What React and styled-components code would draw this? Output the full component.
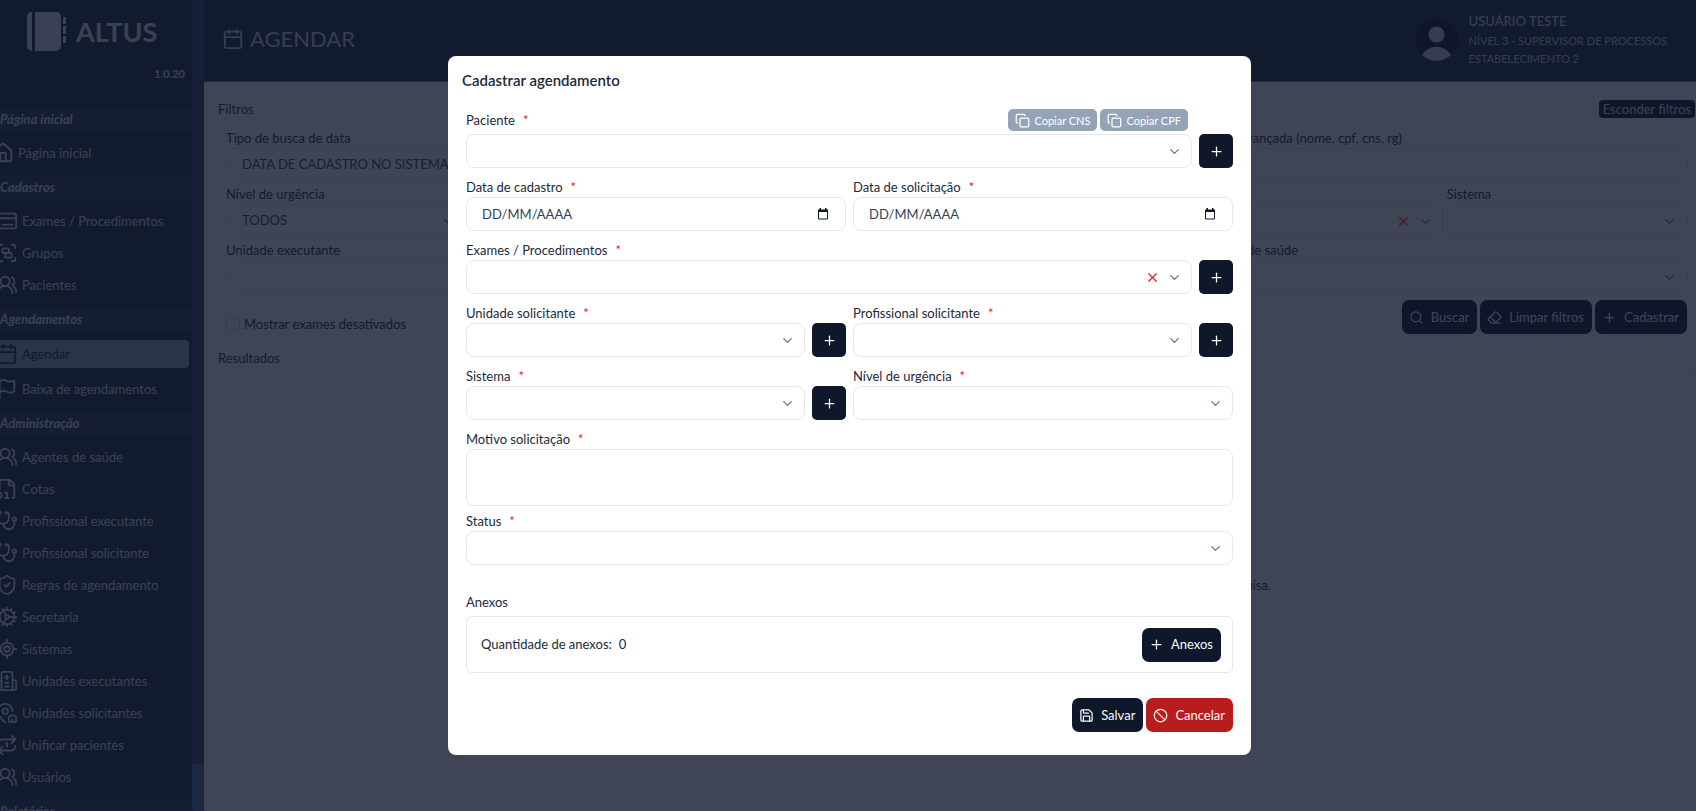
import styled, { createGlobalStyle } from "styled-components";
import {
  Ban,
  Calendar,
  ChevronDown,
  Cog,
  Copy,
  Eraser,
  FileDigit,
  Flag,
  Group,
  House,
  LocateFixed,
  MapPinHouse,
  Plus,
  Repeat1,
  Save,
  Search,
  ShieldCheck,
  Stethoscope,
  UsersRound,
  X,
} from "lucide-react";

const GlobalStyle = createGlobalStyle`
  * {
    box-sizing: border-box;
  }

  body {
    margin: 0;
    background: #ffffff;
    color: #1e293b;
    font-family: "Lato", "Open Sans", sans-serif;
    font-size: 13px;
    line-height: 19px;
    overflow: hidden;
  }

  button, input, select, textarea {
    font: inherit;
    color: inherit;
    margin: 0;
  }
`;

const Layout = styled.div`
  display: flex;
  height: 100vh;
`;

/* sidebar */

const Sidebar = styled.aside`
  display: flex;
  flex: 0 0 204px;
  overflow: hidden;
  background: #1e293b;
  color: #e2e8f0;
`;

const SidebarContent = styled.div`
  flex: 1;
  min-width: 0;
  overflow: hidden;
`;

const ScrollTrack = styled.div`
  display: flex;
  flex-direction: column;
  justify-content: flex-end;
  flex: 0 0 12px;
  background: #323f70;
`;

const ScrollThumb = styled.div`
  height: 47px;
  border-radius: 4px;
  background: #4b76a2;
`;

const Brand = styled.div`
  display: flex;
  flex-direction: column;
  height: 82px;
  padding: 12px 7px 0 27px;
  border-bottom: 1px solid #253145;
`;

const BrandName = styled.div`
  display: flex;
  align-items: center;
  gap: 9px;
  font-size: 27px;
  font-weight: 700;
  line-height: 38px;
`;

const Version = styled.span`
  align-self: flex-end;
  margin-top: 13px;
  font-size: 11px;
  font-weight: 700;
`;

const Nav = styled.nav`
  padding-top: 25px;
`;

const GroupTitle = styled.h2`
  margin: 0;
  padding: 3px 0;
  background: #2b384e;
  font-size: 13px;
  font-weight: 700;
  font-style: italic;
  line-height: 19px;
`;

const GroupList = styled.ul`
  margin: 0;
  padding: 5px 3px 6px 0;
  list-style: none;
`;

const NavLink = styled.a`
  display: flex;
  align-items: center;
  gap: 4px;
  height: ${({ $active }) => ($active ? 28 : 32)}px;
  margin-top: ${({ $active }) => ($active ? 3 : 0)}px;
  margin-bottom: ${({ $active }) => ($active ? 5 : 0)}px;
  margin-left: ${({ $home }) => ($home ? -8 : -4)}px;
  border-radius: 4px;
  background: ${({ $active }) => ($active ? "#94a3b8" : "transparent")};
  color: ${({ $active }) => ($active ? "#1e293b" : "inherit")};
  text-decoration: none;
  white-space: nowrap;

  svg {
    flex: none;
  }
`;

/* page */

const Page = styled.div`
  display: flex;
  flex: 1;
  flex-direction: column;
  min-width: 0;
`;

const Header = styled.header`
  display: flex;
  align-items: center;
  justify-content: space-between;
  height: 82px;
  padding: 0 29px 3px 18px;
  border-bottom: 1px solid #64748b;
  background: #1e293b;
  color: #cbd5e1;
`;

const PageTitle = styled.h1`
  display: flex;
  align-items: center;
  gap: 6px;
  margin: 0;
  font-size: 22px;
  font-weight: 400;
  line-height: 28px;
`;

const UserBox = styled.div`
  display: flex;
  align-items: center;
  gap: 11px;
`;

const UserInfo = styled.div`
  display: flex;
  flex-direction: column;
  font-size: 11px;
  line-height: 18px;

  strong {
    font-size: 13px;
    font-weight: 600;
    line-height: 22px;
  }
`;

const Main = styled.main`
  display: flex;
  flex: 1;
  flex-direction: column;
  padding: 17px 1px 8px 14px;
`;

const SectionBar = styled.div`
  display: flex;
  align-items: center;
  justify-content: space-between;
`;

const ToggleButton = styled.button`
  padding: 0 4px;
  border: 0;
  border-radius: 4px;
  background: #0f172a;
  color: #e2e8f0;
  line-height: 18px;
`;

const SectionTitle = styled.h2`
  margin: 0;
  font-size: 13px;
  font-weight: 400;
  line-height: 20px;
`;

const FilterPanel = styled.form`
  margin: 3px 0 6px;
  padding: 6px 7px 7px;
  border: 1px solid #e2e8f0;
  border-radius: 8px;
`;

const FilterGrid = styled.div`
  display: grid;
  grid-template-columns: repeat(6, minmax(0, 1fr));
  gap: 3px 4px;
`;

const FilterField = styled.div`
  grid-column: ${({ $column }) => $column};
`;

const FilterFooter = styled.div`
  display: flex;
  align-items: center;
  justify-content: space-between;
  margin-top: 6px;
`;

const CheckLabel = styled.label`
  display: flex;
  align-items: center;
  gap: 4px;
  margin-top: 14px;
`;

const CheckBox = styled.input`
  appearance: none;
  width: 14px;
  height: 14px;
  border: 1px solid #cbd5e1;
  border-radius: 4px;
`;

const Results = styled.section`
  display: flex;
  flex: 1;
  align-items: center;
  justify-content: center;
  border: 1px solid #e2e8f0;
  border-radius: 8px;
`;

/* controls */

const Label = styled.label`
  display: block;
  padding-bottom: 1px;
  line-height: 18px;
`;

const Required = styled.span`
  margin-left: 8px;
  color: #dc2626;
`;

const ControlBox = styled.div`
  position: relative;
  flex: 1;
  min-width: 0;
  height: 34px;
`;

const controlStyle = `
  display: block;
  width: 100%;
  border: 1px solid #e5e7f0;
  border-radius: 8px;
  background: transparent;
  outline: none;
`;

const SelectInput = styled.select`
  ${controlStyle}
  appearance: none;
  height: 34px;
  padding: 0 15px 2px;
  color: #334155;
`;

const TextInput = styled.input`
  ${controlStyle}
  height: 34px;
  padding: 0 15px 1px;
  color: #334155;

  &::placeholder {
    color: #334155;
    opacity: 1;
  }
`;

const TextArea = styled.textarea`
  ${controlStyle}
  height: 57px;
  padding: 8px 15px;
  resize: none;
`;

const Adornments = styled.div`
  position: absolute;
  top: 0;
  right: ${({ $right }) => $right || 10}px;
  display: flex;
  align-items: center;
  gap: 7px;
  height: 34px;
  color: #64748b;
  pointer-events: none;
`;

const ClearButton = styled.button`
  display: flex;
  padding: 0;
  border: 0;
  background: none;
  color: #dc2626;
  pointer-events: auto;
`;

const Button = styled.button`
  display: flex;
  align-items: center;
  gap: 7px;
  height: 34px;
  padding: 0 8px 0 7px;
  border: 0;
  border-radius: 7px;
  background: ${({ $danger }) => ($danger ? "#b91c1c" : "#0f172a")};
  color: #f8fafc;
`;

const AddButton = styled(Button)`
  flex: 0 0 34px;
  justify-content: center;
  padding: 0;
  border-radius: 5px;
`;

const CopyButton = styled.button`
  display: flex;
  align-items: center;
  gap: 4px;
  height: 22px;
  padding: 0 7px;
  border: 0;
  border-radius: 5px;
  background: #94a3b8;
  color: #ffffff;
  font-size: 11px;
`;

/* dialog */

const Overlay = styled.div`
  position: fixed;
  inset: 0;
  display: flex;
  align-items: center;
  justify-content: center;
  padding-left: 3px;
  background: rgba(15, 23, 42, 0.8);
`;

const Dialog = styled.form`
  width: 100%;
  max-width: 803px;
  padding: 14px 18px 23px;
  border-radius: 8px;
  background: #ffffff;
`;

const DialogTitle = styled.h2`
  margin: 0 0 19px -4px;
  font-size: 15px;
  font-weight: 600;
  line-height: 20px;
`;

const FormGrid = styled.div`
  display: grid;
  grid-template-columns: repeat(2, minmax(0, 1fr));
  column-gap: 7px;
`;

const FormField = styled.div`
  grid-column: ${({ $wide }) => ($wide ? "1 / -1" : "auto")};
  margin-bottom: ${({ $tight }) => ($tight ? 6 : 10)}px;
`;

const LabelRow = styled.div`
  display: flex;
  align-items: center;
  justify-content: space-between;
  height: 25px;
  padding: 0 45px 3px 0;
`;

const ButtonRow = styled.div`
  display: flex;
  justify-content: flex-end;
  gap: 3px;
`;

const ControlRow = styled.div`
  display: flex;
  gap: 7px;
`;

const AttachmentsTitle = styled.h3`
  margin: 18px 0 4px;
  font-size: 13px;
  font-weight: 400;
  line-height: 19px;
`;

const Attachments = styled.div`
  display: flex;
  align-items: center;
  justify-content: space-between;
  height: 57px;
  margin-bottom: 25px;
  padding: 0 11px 0 14px;
  border: 1px solid #e5e7eb;
  border-radius: 6px;
`;

const AttachmentCount = styled.span`
  margin-left: 7px;
`;

const strokeProps = {
  viewBox: "0 0 24 24",
  fill: "none",
  stroke: "currentColor",
  strokeWidth: 2,
  strokeLinecap: "round",
  strokeLinejoin: "round",
};

function CardIcon({ size }) {
  return (
    <svg width={size} height={size} {...strokeProps}>
      <rect x="2" y="4" width="20" height="16" rx="2" />
      <path d="M2 9h20" />
      <path d="M7 16h11" />
    </svg>
  );
}

function HospitalIcon({ size }) {
  return (
    <svg width={size} height={size} {...strokeProps}>
      <path d="M6 22V4a2 2 0 0 1 2-2h8a2 2 0 0 1 2 2v18" />
      <path d="M18 11h2a2 2 0 0 1 2 2v7a2 2 0 0 1-2 2H4a2 2 0 0 1-2-2v-6a2 2 0 0 1 2-2h2" />
      <path d="M12 6v4M10 8h4M10 14h4M10 18h4" />
    </svg>
  );
}

const groups = [
  { title: "Página inicial", items: [{ label: "Página inicial", icon: House, home: true }] },
  {
    title: "Cadastros",
    items: [
      { label: "Exames / Procedimentos", icon: CardIcon },
      { label: "Grupos", icon: Group },
      { label: "Pacientes", icon: UsersRound },
    ],
  },
  {
    title: "Agendamentos",
    items: [
      { label: "Agendar", icon: Calendar, active: true },
      { label: "Baixa de agendamentos", icon: Flag },
    ],
  },
  {
    title: "Administração",
    items: [
      { label: "Agentes de saúde", icon: UsersRound },
      { label: "Cotas", icon: FileDigit },
      { label: "Profissional executante", icon: Stethoscope },
      { label: "Profissional solicitante", icon: Stethoscope },
      { label: "Regras de agendamento", icon: ShieldCheck },
      { label: "Secretaria", icon: Cog },
      { label: "Sistemas", icon: LocateFixed },
      { label: "Unidades executantes", icon: HospitalIcon },
      { label: "Unidades solicitantes", icon: MapPinHouse },
      { label: "Unificar pacientes", icon: Repeat1 },
      { label: "Usuários", icon: UsersRound },
    ],
  },
  { title: "Relatórios", items: [] },
];

function Logo() {
  return (
    <svg width="40" height="39" viewBox="0 0 40 39" fill="currentColor">
      <path d="M5 0v39a5 5 0 0 1-5-5V5a5 5 0 0 1 5-5z" />
      <path d="M8 0h21a5 5 0 0 1 5 5v29a5 5 0 0 1-5 5H8z" />
      <path d="M36 5h3v7h-3zM36 14h3v8h-3zM36 24h3v7h-3z" />
    </svg>
  );
}

function Avatar() {
  return (
    <svg width="43" height="43" viewBox="0 0 43 43">
      <circle cx="21.5" cy="21.5" r="21.5" fill="#0f172a" />
      <circle cx="21.5" cy="16.5" r="8" fill="#cbd5e1" />
      <path d="M7 37a17 17 0 0 1 29 0a21 21 0 0 1-29 0z" fill="#cbd5e1" />
    </svg>
  );
}

function DateIcon() {
  return (
    <svg width="12" height="12" viewBox="0 0 12 12">
      <path d="M1.500 2.500h9v8.500h-9z" fill="none" stroke="#111827" />
      <path d="M1 1.500h10v2.500H1zM2.500 0h1.500v2H2.500zM8 0h1.500v2H8z" fill="#111827" />
    </svg>
  );
}

function Select({ id, value, clearable }) {
  return (
    <ControlBox>
      <SelectInput id={id}>
        <option>{value || ""}</option>
      </SelectInput>
      <Adornments>
        {clearable && (
          <ClearButton type="button" aria-label="Limpar">
            <X size={15} />
          </ClearButton>
        )}
        <ChevronDown size={15} />
      </Adornments>
    </ControlBox>
  );
}

function FormLabel({ id, children }) {
  return (
    <Label htmlFor={id}>
      {children}
      <Required>*</Required>
    </Label>
  );
}

function SelectField({ id, label, wide, clearable, addable }) {
  return (
    <FormField $wide={wide}>
      <FormLabel id={id}>{label}</FormLabel>
      <ControlRow>
        <Select id={id} clearable={clearable} />
        {addable && (
          <AddButton type="button" aria-label={`Adicionar ${label}`}>
            <Plus size={15} />
          </AddButton>
        )}
      </ControlRow>
    </FormField>
  );
}

function DateField({ id, label }) {
  return (
    <FormField>
      <FormLabel id={id}>{label}</FormLabel>
      <ControlBox>
        <TextInput id={id} placeholder="DD/MM/AAAA" />
        <Adornments $right={17}>
          <DateIcon />
        </Adornments>
      </ControlBox>
    </FormField>
  );
}

function SideMenu() {
  return (
    <Sidebar>
      <SidebarContent>
        <Brand>
          <BrandName>
            <Logo />
            ALTUS
          </BrandName>
          <Version>1.0.20</Version>
        </Brand>
        <Nav>
          {groups.map((group) => (
            <div key={group.title}>
              <GroupTitle>{group.title}</GroupTitle>
              <GroupList>
                {group.items.map(({ label, icon: Icon, active, home }) => (
                  <li key={label}>
                    <NavLink href="#" $active={active} $home={home}>
                      <Icon size={22} />
                      {label}
                    </NavLink>
                  </li>
                ))}
              </GroupList>
            </div>
          ))}
        </Nav>
      </SidebarContent>
      <ScrollTrack>
        <ScrollThumb />
      </ScrollTrack>
    </Sidebar>
  );
}

function Filters() {
  return (
    <FilterPanel>
      <FilterGrid>
        <FilterField $column="1 / 2">
          <Label htmlFor="f-tipo">Tipo de busca de data</Label>
          <Select id="f-tipo" value="DATA DE CADASTRO NO SISTEMA" />
        </FilterField>
        <FilterField $column="5 / 7">
          <Label htmlFor="f-busca">Busca avançada (nome, cpf, cns, rg)</Label>
          <TextInput id="f-busca" />
        </FilterField>
        <FilterField $column="1 / 2">
          <Label htmlFor="f-nivel">Nível de urgência</Label>
          <Select id="f-nivel" value="TODOS" />
        </FilterField>
        <FilterField $column="5 / 6">
          <Label htmlFor="f-status">Status</Label>
          <Select id="f-status" clearable />
        </FilterField>
        <FilterField $column="6 / 7">
          <Label htmlFor="f-sistema">Sistema</Label>
          <Select id="f-sistema" />
        </FilterField>
        <FilterField $column="1 / 5">
          <Label htmlFor="f-unidade">Unidade executante</Label>
          <Select id="f-unidade" />
        </FilterField>
        <FilterField $column="5 / 7">
          <Label htmlFor="f-agente">Agente de saúde</Label>
          <Select id="f-agente" />
        </FilterField>
      </FilterGrid>
      <FilterFooter>
        <CheckLabel>
          <CheckBox type="checkbox" />
          Mostrar exames desativados
        </CheckLabel>
        <ButtonRow>
          <Button type="button">
            <Search size={15} />
            Buscar
          </Button>
          <Button type="button">
            <Eraser size={15} />
            Limpar filtros
          </Button>
          <Button type="button">
            <Plus size={15} />
            Cadastrar
          </Button>
        </ButtonRow>
      </FilterFooter>
    </FilterPanel>
  );
}

function ScheduleDialog() {
  return (
    <Overlay>
      <Dialog role="dialog" aria-labelledby="dialog-title">
        <DialogTitle id="dialog-title">Cadastrar agendamento</DialogTitle>
        <FormGrid>
          <FormField $wide>
            <LabelRow>
              <FormLabel id="paciente">Paciente</FormLabel>
              <ButtonRow>
                <CopyButton type="button">
                  <Copy size={15} />
                  Copiar CNS
                </CopyButton>
                <CopyButton type="button">
                  <Copy size={15} />
                  Copiar CPF
                </CopyButton>
              </ButtonRow>
            </LabelRow>
            <ControlRow>
              <Select id="paciente" />
              <AddButton type="button" aria-label="Adicionar paciente">
                <Plus size={15} />
              </AddButton>
            </ControlRow>
          </FormField>
          <DateField id="data-cadastro" label="Data de cadastro" />
          <DateField id="data-solicitacao" label="Data de solicitação" />
          <SelectField id="exames" label="Exames / Procedimentos" wide clearable addable />
          <SelectField id="unidade" label="Unidade solicitante" addable />
          <SelectField id="profissional" label="Profissional solicitante" addable />
          <SelectField id="sistema" label="Sistema" addable />
          <SelectField id="nivel" label="Nível de urgência" />
          <FormField $wide $tight>
            <FormLabel id="motivo">Motivo solicitação</FormLabel>
            <TextArea id="motivo" />
          </FormField>
          <SelectField id="status" label="Status" wide />
        </FormGrid>
        <AttachmentsTitle>Anexos</AttachmentsTitle>
        <Attachments>
          <span>
            Quantidade de anexos:
            <AttachmentCount>0</AttachmentCount>
          </span>
          <Button type="button">
            <Plus size={15} />
            Anexos
          </Button>
        </Attachments>
        <ButtonRow>
          <Button type="submit">
            <Save size={15} />
            Salvar
          </Button>
          <Button type="button" $danger>
            <Ban size={15} />
            Cancelar
          </Button>
        </ButtonRow>
      </Dialog>
    </Overlay>
  );
}

function App() {
  return (
    <>
      <GlobalStyle />
      <Layout>
        <SideMenu />
        <Page>
          <Header>
            <PageTitle>
              <Calendar size={22} />
              AGENDAR
            </PageTitle>
            <UserBox>
              <Avatar />
              <UserInfo>
                <strong>USUÁRIO TESTE</strong>
                <span>NÍVEL 3 - SUPERVISOR DE PROCESSOS</span>
                <span>ESTABELECIMENTO 2</span>
              </UserInfo>
            </UserBox>
          </Header>
          <Main>
            <SectionBar>
              <SectionTitle>Filtros</SectionTitle>
              <ToggleButton type="button">Esconder filtros</ToggleButton>
            </SectionBar>
            <Filters />
            <SectionTitle>Resultados</SectionTitle>
            <Results>
              Nenhum agendamento foi encontrado. Utilize os filtros disponíveis logo acima para realizar uma nova pesquisa.
            </Results>
          </Main>
        </Page>
      </Layout>
      <ScheduleDialog />
    </>
  );
}

export default App;
